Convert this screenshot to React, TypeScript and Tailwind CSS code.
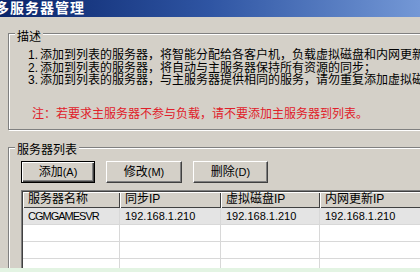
import React from 'react';

/* ------------------ DATA ------------------ */
const notes = [
  '添加到列表的服务器，将智能分配给各客户机，负载虚拟磁盘和内网更新的服务；',
  '添加到列表的服务器，将自动与主服务器保持所有资源的同步；',
  '添加到列表的服务器，与主服务器提供相同的服务，请勿重复添加虚拟磁盘服务器。',
];

const columns = [
  { label: '服务器名称', w: 'w-[97px]' },
  { label: '同步IP', w: 'w-[101px]' },
  { label: '虚拟磁盘IP', w: 'w-[99px]' },
  { label: '内网更新IP', w: 'w-[120px]' },
];

const rows = [
  ['CGMGAMESVR', '192.168.1.210', '192.168.1.210', '192.168.1.210'],
  ['', '', '', ''],
  ['', '', '', ''],
  ['', '', '', ''],
];

const raised =
  'border border-t-white border-l-white border-r-[#404040] border-b-[#404040] shadow-[inset_-1px_-1px_0_#808080]';
const etched =
  'border border-[#808080] shadow-[1px_1px_0_#fff,inset_1px_1px_0_#fff]';

/* ------------------ COMPONENT ------------------ */
export default function App() {
  return (
    <div className="w-[420px] h-[272px] overflow-hidden flex flex-col bg-[#d4d0c8] text-black text-[12px] font-['Liberation_Sans','Noto_Sans_CJK_SC',sans-serif]">
      {/* TITLE */}
      <div className="h-[17px] shrink-0 bg-linear-to-r from-[#0a246a] via-[#2f55a3] to-[#7498d6] flex items-center">
        <span className="-ml-[5px] text-white font-bold text-[14px] leading-[17px] tracking-[1px]">
          多服务器管理
        </span>
      </div>

      {/* BODY */}
      <div className="flex-1 overflow-hidden pl-[8px]">
        {/* 描述 */}
        <div className={`mt-[16px] w-[440px] h-[97px] pl-[19px] ${etched}`}>
          <div className="-mt-[4px] -ml-[13px] w-fit px-[2px] bg-[#d4d0c8] leading-[14px]">描述</div>
          <div className="mt-[5px] leading-[12.5px]">
            {notes.map((n, i) => (
              <div key={i} className="flex whitespace-nowrap">
                <span className="w-[12px] shrink-0">{i + 1}.</span>
                <span>{n}</span>
              </div>
            ))}
          </div>
          <div className="mt-[21px] pl-[4px] leading-[13px] text-[#e0202a] whitespace-nowrap">
            注：若要求主服务器不参与负载，请不要添加主服务器到列表。
          </div>
        </div>

        {/* 服务器列表 */}
        <div className={`mt-[17px] w-[440px] h-[200px] pl-[12px] ${etched}`}>
          <div className="-mt-[5px] -ml-[6px] w-fit px-[2px] bg-[#d4d0c8] leading-[14px]">服务器列表</div>

          <div className="mt-[4px] flex gap-[11px]">
            <button className="w-[74px] h-[22px] border border-black bg-[#d4d0c8] shadow-[inset_1px_1px_0_#fff,inset_-1px_-1px_0_#404040,inset_-2px_-2px_0_#808080] flex items-center justify-center">
              添加<span className="text-[11px]">(A)</span>
            </button>
            <button className={`w-[76px] h-[22px] bg-[#d4d0c8] ${raised} flex items-center justify-center`}>
              修改<span className="text-[11px]">(M)</span>
            </button>
            <button className={`w-[75px] h-[22px] bg-[#d4d0c8] ${raised} flex items-center justify-center`}>
              删除<span className="text-[11px]">(D)</span>
            </button>
          </div>

          {/* LIST */}
          <div className="mt-[7px] w-[420px] border border-t-[#808080] border-l-[#808080] border-r-white border-b-white">
            <div className="border border-t-[#404040] border-l-[#404040] border-r-[#d4d0c8] border-b-[#d4d0c8] bg-white">
              <div className="flex">
                {columns.map(c => (
                  <div
                    key={c.label}
                    className={`${c.w} h-[16px] shrink-0 bg-[#d4d0c8] pl-[5px] leading-[15px] shadow-[inset_1px_1px_0_#fff,inset_-1px_-1px_0_#404040] whitespace-nowrap`}
                  >
                    {c.label}
                  </div>
                ))}
              </div>
              {rows.map((r, i) => (
                <div key={i} className={`flex ${i === 0 ? 'bg-[#e4e4e4]' : ''}`}>
                  {r.map((v, j) => (
                    <div
                      key={j}
                      className={`${columns[j].w} h-[17px] shrink-0 border-b border-r border-[#d8d8d8] pl-[5px] leading-[16px] text-[11px] whitespace-nowrap ${
                        j === 0 ? 'tracking-[-1px]' : ''
                      }`}
                    >
                      {v}
                    </div>
                  ))}
                </div>
              ))}
            </div>
          </div>
        </div>
      </div>

      <div className="h-[4px] shrink-0 bg-[#e3f4e3]" />
    </div>
  );
}
